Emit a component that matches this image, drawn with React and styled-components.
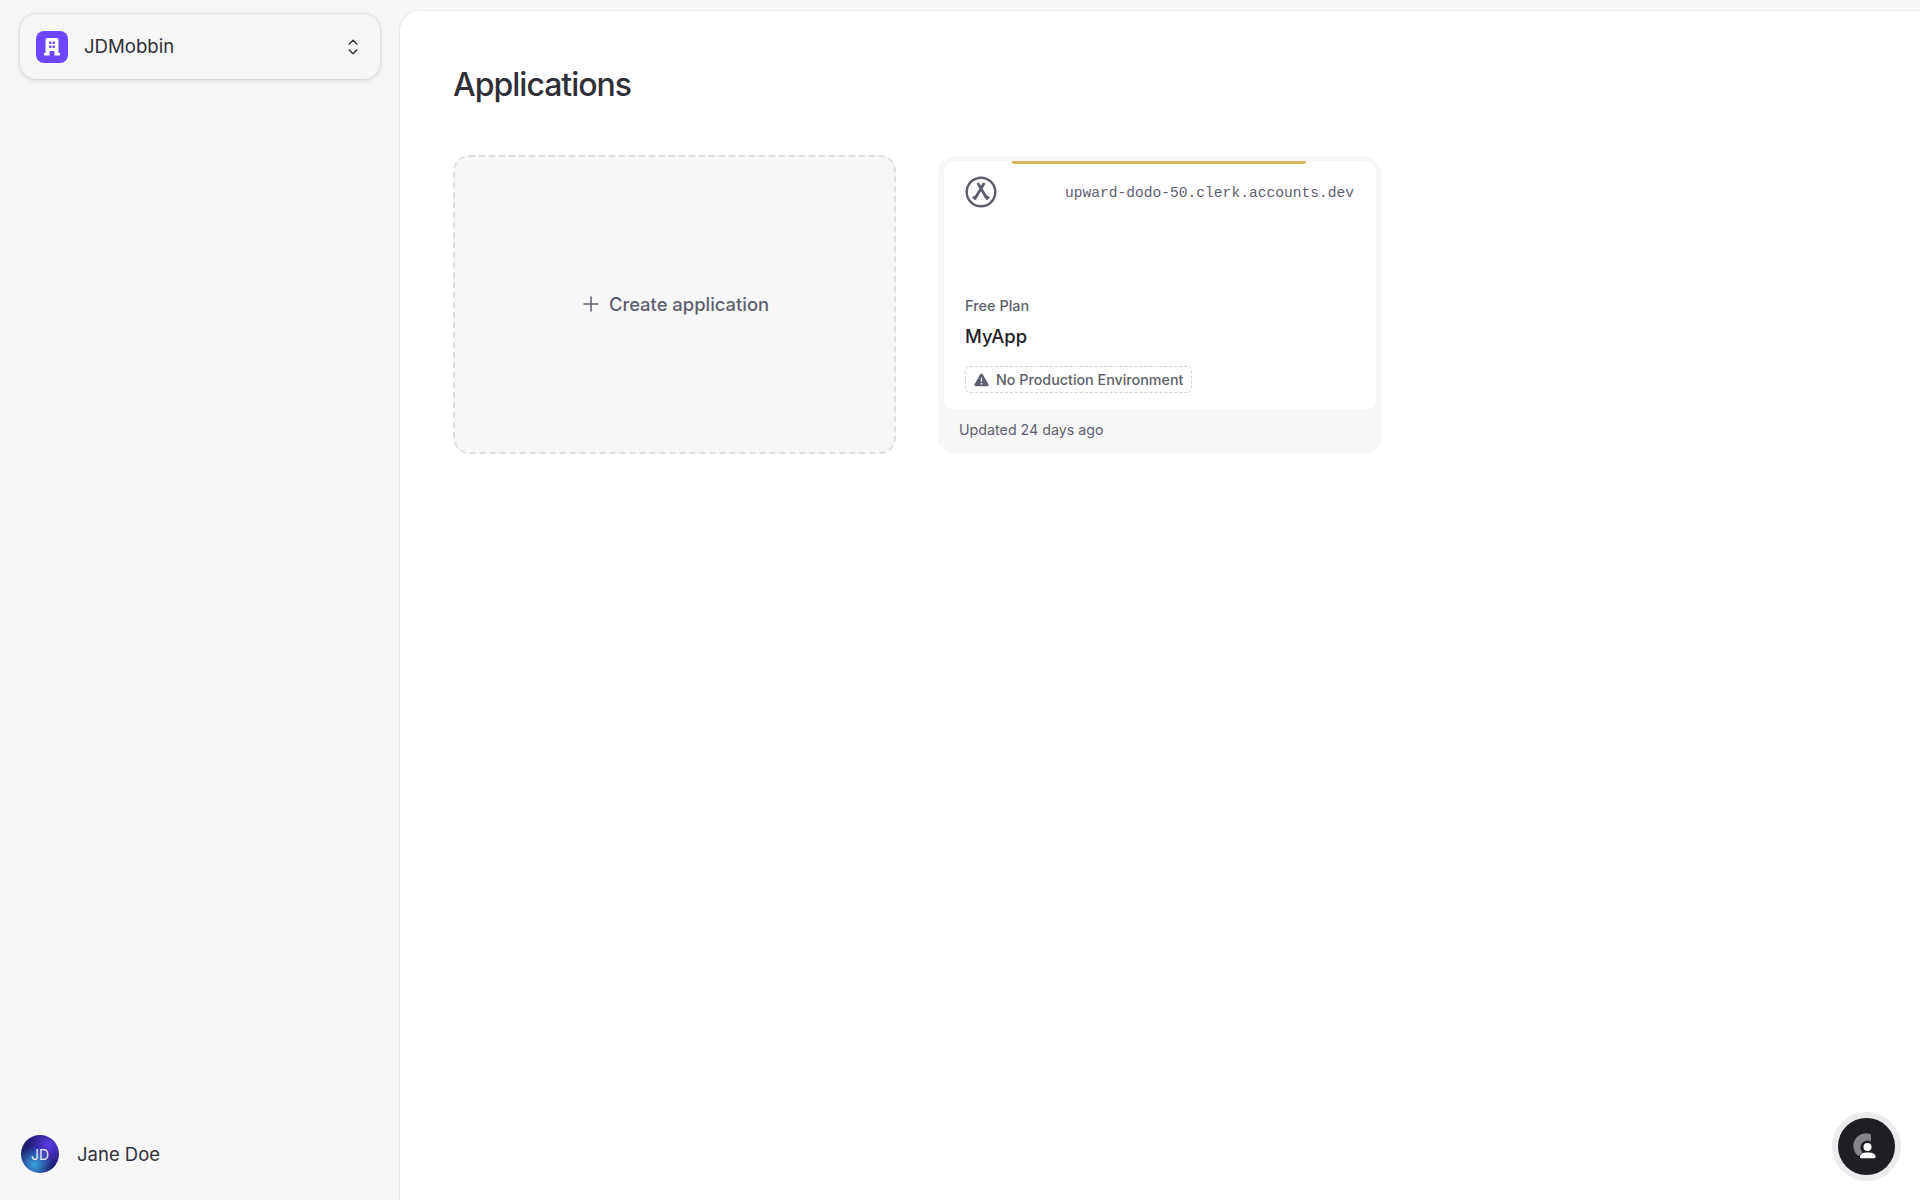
import React from 'react';
import styled, { createGlobalStyle } from 'styled-components';

const GlobalStyle = createGlobalStyle`
  html, body {
    margin: 0;
    padding: 0;
    background: #f7f7f8;
  }
  * {
    box-sizing: border-box;
  }
  body {
    font-family: Inter, "Noto Sans", sans-serif;
    color: #2f3037;
  }
`;

const BuildingIcon = () => (
  <svg width="18" height="20" viewBox="0 0 18 20" fill="none">
    <path
      fillRule="evenodd"
      d="M4 1h10a1.5 1.5 0 0 1 1.5 1.5V16H17v2.5h-5.5V15a1 1 0 0 0-1-1h-3a1 1 0 0 0-1 1v3.5H1V16h1.500V2.500A1.500 1.500 0 0 1 4 1Zm2.200 3.500v2.400h2.200V4.500H6.200Zm3.400 0v2.400h2.200V4.500H9.600ZM6.200 8.600V11h2.200V8.600H6.200Zm3.400 0V11h2.200V8.600H9.600Z"
      fill="#fff"
    />
  </svg>
);

const ChevronsIcon = () => (
  <svg width="12" height="18" viewBox="0 0 12 18" fill="none" stroke="#2f3037" strokeWidth="1.4" strokeLinecap="round" strokeLinejoin="round">
    <path d="M2.200 6 6 2.200 9.800 6" />
    <path d="M2.200 12 6 15.800 9.800 12" />
  </svg>
);

const PlusIcon = () => (
  <svg width="16" height="16" viewBox="0 0 16 16" fill="none" stroke="#5e5f6e" strokeWidth="1.500" strokeLinecap="round">
    <path d="M8 1v14M1 8h14" />
  </svg>
);

const AppStoreIcon = () => (
  <svg width="32" height="32" viewBox="0 0 32 32" fill="none" stroke="#5e5f6e" strokeLinecap="round">
    <circle cx="16" cy="16" r="14.300" strokeWidth="2.400" />
    <path d="M13.300 8 22 22.500M18.700 8 10 22.500" strokeWidth="2.800" />
    <path d="M8.500 21.500 12 20M20 20l3.500 1.500" strokeWidth="2.400" />
  </svg>
);

const WarningIcon = () => (
  <svg width="15" height="14" viewBox="0 0 15 14">
    <path
      fillRule="evenodd"
      d="M6.300 1.200a1.400 1.400 0 0 1 2.400 0l5.700 10a1.400 1.400 0 0 1-1.200 2.100H1.800a1.400 1.400 0 0 1-1.200-2.100l5.700-10ZM6.800 4.700h1.400v4.100H6.800V4.700Zm0 5.200h1.400v1.500H6.800V9.900Z"
      fill="#5e5f6e"
    />
  </svg>
);

const HelperIcon = () => (
  <svg width="28" height="28" viewBox="0 0 28 28" fill="none">
    <path d="M18 1.500A12.500 12.500 0 0 0 5.500 23l4-3.500A7 7 0 0 1 18 8.500Z" fill="#85858a" />
    <circle cx="14.500" cy="14" r="4" fill="#fff" />
    <path d="M7 24c0-3 3-4.400 7.800-4.400s7.800 1.400 7.800 4.400c0 .8-.6 1.300-1.400 1.300H8.400C7.600 25.300 7 24.800 7 24Z" fill="#fff" />
  </svg>
);

const App = () => {
  return (
    <Page>
      <GlobalStyle />
      <Sidebar>
        <Switcher>
          <OrgLogo>
            <BuildingIcon />
          </OrgLogo>
          <OrgName>JDMobbin</OrgName>
          <ChevronsIcon />
        </Switcher>
        <UserRow>
          <Avatar>JD</Avatar>
          <UserName>Jane Doe</UserName>
        </UserRow>
      </Sidebar>

      <Main>
        <Title>Applications</Title>
        <CardGrid>
          <CreateCard>
            <PlusIcon />
            <span>Create application</span>
          </CreateCard>

          <AppCard>
            <AppCardBody>
              <PlanBar />
              <CardTop>
                <AppStoreIcon />
                <Domain>upward-dodo-50.clerk.accounts.dev</Domain>
              </CardTop>
              <PlanLabel>Free Plan</PlanLabel>
              <AppName>MyApp</AppName>
              <EnvBadge>
                <WarningIcon />
                No Production Environment
              </EnvBadge>
            </AppCardBody>
            <Updated>Updated 24 days ago</Updated>
          </AppCard>
        </CardGrid>
      </Main>

      <HelperButton>
        <HelperIcon />
      </HelperButton>
    </Page>
  );
};

const Page = styled.div`
  display: flex;
  height: 1200px;
  overflow: hidden;
  background: #f7f7f8;
`;

const Sidebar = styled.aside`
  width: 399px;
  flex-shrink: 0;
  display: flex;
  flex-direction: column;
  justify-content: space-between;
  padding: 14px 19px 27px 20px;
`;

const Switcher = styled.div`
  display: flex;
  align-items: center;
  height: 65px;
  padding: 0 21px 0 16px;
  border-radius: 16px;
  background: #f7f7f8;
  box-shadow: 0 0 0 1px rgba(0, 0, 0, 0.04), 0 1px 5px rgba(0, 0, 0, 0.14);
`;

const OrgLogo = styled.div`
  width: 32px;
  height: 32px;
  border-radius: 8px;
  background: #6c47ff;
  display: flex;
  align-items: center;
  justify-content: center;
`;

const OrgName = styled.div`
  flex: 1;
  margin: -1px 0 0 16px;
  font-size: 18.600px;
  line-height: 24px;
  color: #2f3037;
`;

const UserRow = styled.div`
  display: flex;
  align-items: center;
  gap: 18px;
  margin-left: 1px;
`;

const Avatar = styled.div`
  width: 38px;
  height: 38px;
  border-radius: 50%;
  display: flex;
  align-items: center;
  justify-content: center;
  font-size: 14px;
  color: #e8e8f5;
  background:
    radial-gradient(circle at 35% 78%, #3aa6e4 0%, rgba(58, 166, 228, 0) 48%),
    radial-gradient(circle at 72% 28%, #5b3ae6 0%, rgba(91, 58, 230, 0) 55%),
    #1c1a6e;
`;

const UserName = styled.div`
  font-size: 18.500px;
  line-height: 24px;
  color: #2f3037;
`;

const Main = styled.main`
  flex: 1;
  margin-top: 10px;
  padding: 54px 53px;
  background: #fff;
  border-top: 1px solid #e9e9ec;
  border-left: 1px solid #e9e9ec;
  border-top-left-radius: 20px;
`;

const Title = styled.h1`
  margin: 0 0 50px;
  font-size: 32px;
  line-height: 40px;
  font-weight: 500;
  letter-spacing: -1px;
  color: #2f3037;
`;

const CardGrid = styled.div`
  display: grid;
  grid-template-columns: repeat(3, 443px);
  gap: 42px;
`;

const CreateCard = styled.div`
  height: 299px;
  display: flex;
  align-items: center;
  justify-content: center;
  gap: 10px;
  padding: 0 0 2px 3px;
  border: 2px dashed #dfdfe3;
  border-radius: 16px;
  background: #f7f7f8;
  font-size: 18.400px;
  font-weight: 500;
  color: #5e5f6e;
`;

const AppCard = styled.div`
  height: 298px;
  margin-top: 1px;
  padding: 5px 5px 0 6px;
  display: flex;
  flex-direction: column;
  border-radius: 16px;
  background: #f7f7f8;
`;

const AppCardBody = styled.div`
  position: relative;
  height: 249px;
  padding: 15px 22px 0 21px;
  background: #fff;
  border-radius: 10px;
  box-shadow: 0 0 1px rgba(0, 0, 0, 0.08);
`;

const PlanBar = styled.div`
  position: absolute;
  top: 0;
  left: 68px;
  width: 294px;
  height: 3px;
  border-radius: 0 0 2px 2px;
  background: #d6b65e;
`;

const CardTop = styled.div`
  display: flex;
  align-items: center;
  justify-content: space-between;
  height: 32px;
`;

const Domain = styled.div`
  margin-top: 2px;
  font-family: "Liberation Mono", monospace;
  font-size: 14.600px;
  color: #5e5f6e;
`;

const PlanLabel = styled.div`
  margin-top: 88px;
  font-size: 14.500px;
  line-height: 20px;
  font-weight: 500;
  color: #5e5f6e;
`;

const AppName = styled.div`
  margin-top: 8px;
  font-size: 18.400px;
  line-height: 24px;
  font-weight: 500;
  color: #212126;
`;

const EnvBadge = styled.div`
  display: inline-flex;
  align-items: center;
  gap: 7px;
  height: 27px;
  margin-top: 18px;
  padding: 0 8px;
  border: 1.500px dashed #d4d4d9;
  border-radius: 5px;
  font-size: 14.300px;
  font-weight: 500;
  color: #5e5f6e;
`;

const Updated = styled.div`
  display: flex;
  align-items: center;
  flex: 1;
  padding: 0 0 5px 15px;
  font-size: 14.250px;
  font-weight: 400;
  color: #5e5f6e;
`;

const HelperButton = styled.div`
  position: fixed;
  right: 19px;
  bottom: 19px;
  width: 69px;
  height: 69px;
  border-radius: 50%;
  display: flex;
  align-items: center;
  justify-content: center;
  background: #1f1f23;
  border: 6.500px solid #ececee;
`;

export default App;
